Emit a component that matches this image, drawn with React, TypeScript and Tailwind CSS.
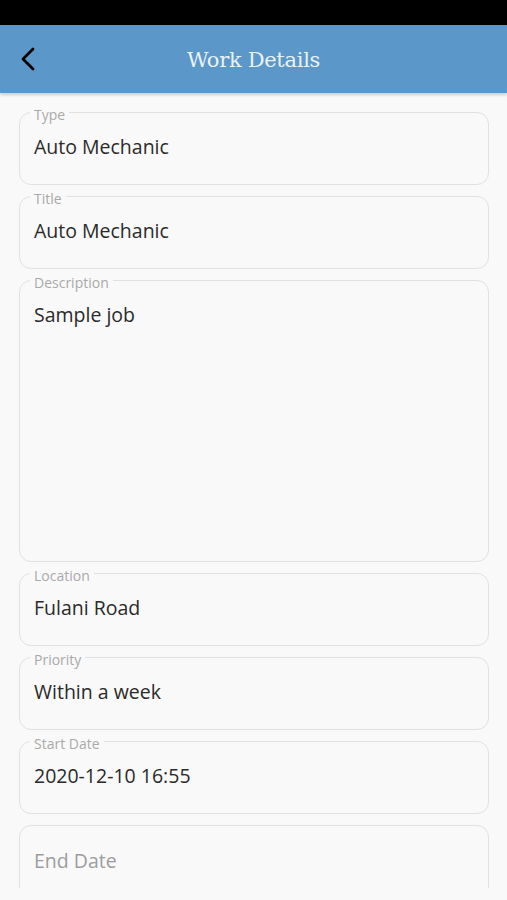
import React from "react";

const fields = [
  { label: "Type", value: "Auto Mechanic", h: "h-[81px]" },
  { label: "Title", value: "Auto Mechanic", h: "h-[81px]" },
  { label: "Description", value: "Sample job", h: "h-[290px]" },
  { label: "Location", value: "Fulani Road", h: "h-[81px]" },
  { label: "Priority", value: "Within a week", h: "h-[81px]" },
  { label: "Start Date", value: "2020-12-10 16:55", h: "h-[81px]" },
];

export default function App() {
  return (
    <div className="h-[900px] w-full flex flex-col bg-[#f9f9f9] font-['Open_Sans',sans-serif] overflow-hidden">
      {/* status bar */}
      <div className="h-[25px] bg-black shrink-0" />

      {/* app bar */}
      <header className="h-[68px] shrink-0 bg-[#5b97c8] flex items-center relative shadow-[0_2px_3px_rgba(0,0,0,0.18)] z-10">
        <button className="w-[56px] h-full flex items-center pl-[18px]">
          <svg width="20" height="26" viewBox="0 0 20 26" fill="none">
            <polyline points="15,3 5,13 15,23" stroke="#000" strokeWidth="2.8" strokeLinecap="round" strokeLinejoin="round" />
          </svg>
        </button>
        <h1 className="flex-1 text-center pr-[56px] pt-[3px] text-[21px] text-[#eaf2f9] font-['DejaVu_Serif',serif] tracking-[-0.3px]">
          Work Details
        </h1>
      </header>

      {/* form */}
      <main className="flex-1 overflow-hidden pl-[19px] pr-[18px] pt-[11px] flex flex-col gap-[3px]">
        {fields.map((f) => (
          <fieldset
            key={f.label}
            className={`${f.h} shrink-0 border border-[#e1e1e1] rounded-[12px] px-[14px] m-0`}
          >
            <legend className="-ml-[4px] px-[4px] text-[14px] leading-4 text-[#a9a9a9]">
              <span className="relative top-[3px]">{f.label}</span>
            </legend>
            <p className="pt-[15px] text-[19.5px] leading-6 text-[#2a2a2a]">{f.value}</p>
          </fieldset>
        ))}
        <div className="mt-[8px] h-[120px] shrink-0 border border-[#e1e1e1] rounded-[12px] px-[14px] pt-[23px]">
          <p className="text-[19.5px] leading-6 text-[#9d9d9d]">End Date</p>
        </div>
      </main>
      <div className="h-[12px] shrink-0" />
    </div>
  );
}
